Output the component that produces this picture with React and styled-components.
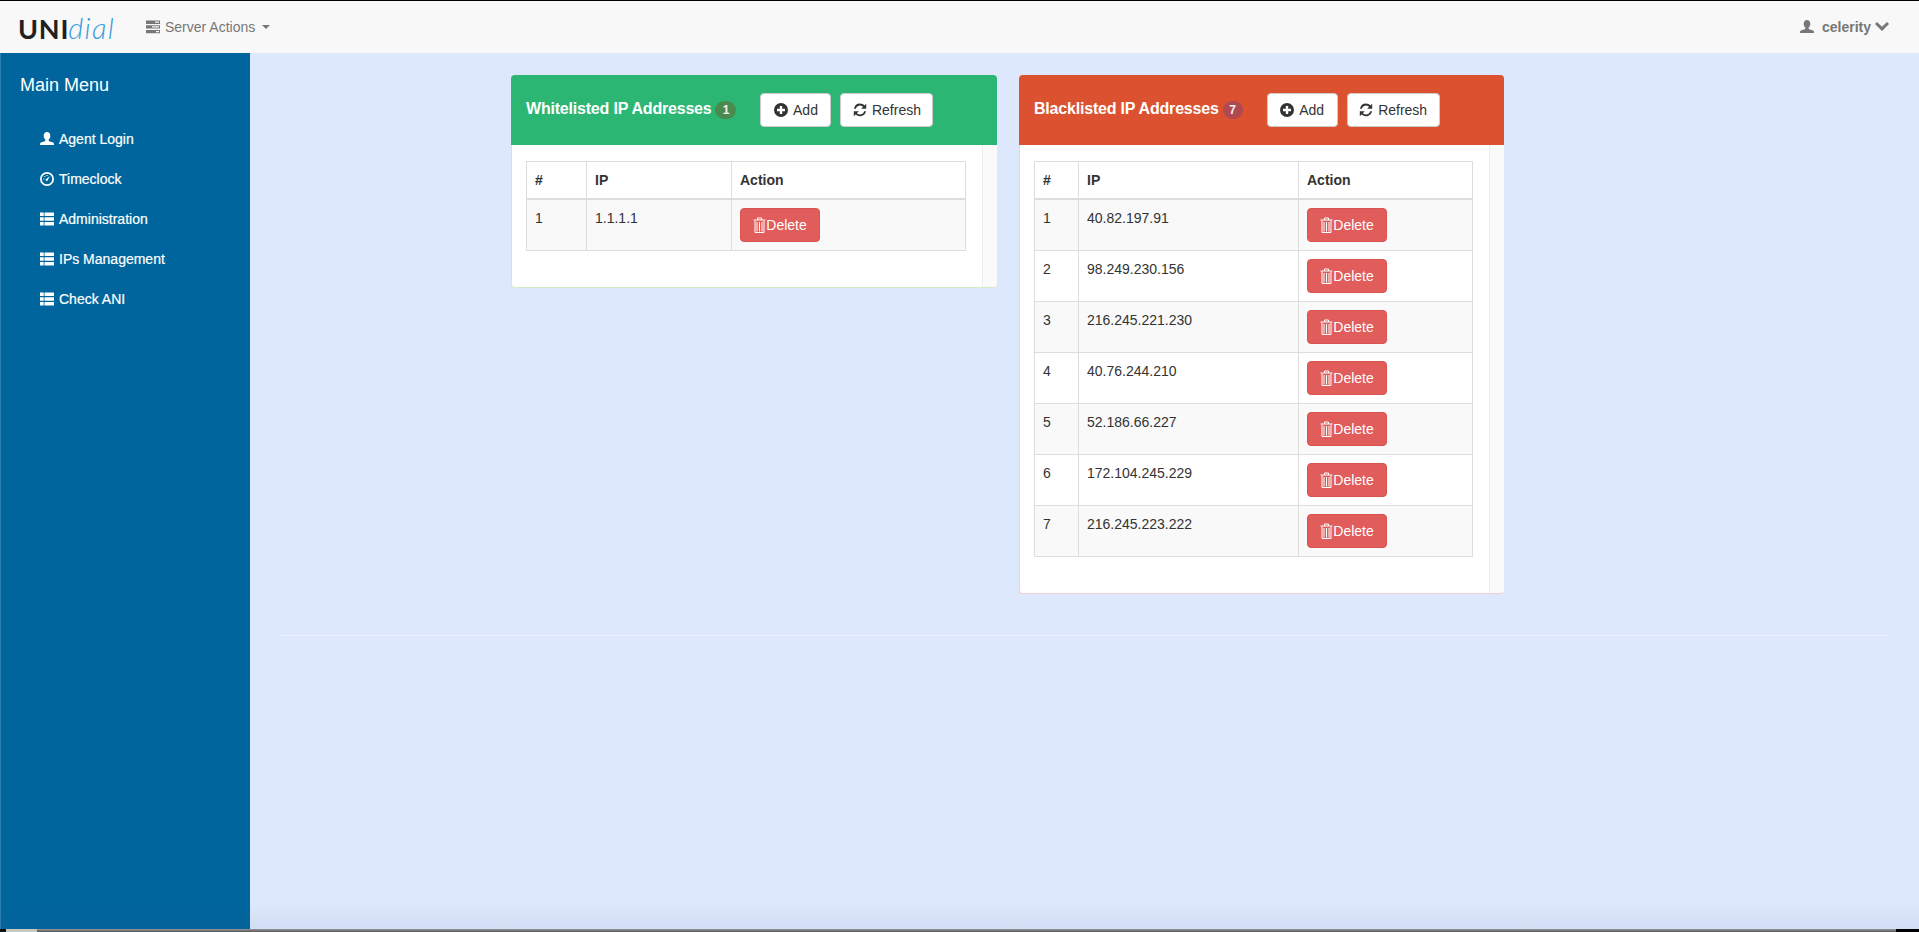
import React from "react";
import styled, { createGlobalStyle } from "styled-components";

const Global = createGlobalStyle`
  html, body { margin: 0; padding: 0; height: 100%; }
  body { font-family: "Liberation Sans", Arial, sans-serif; font-size: 14px; line-height: 20px; color: #333; background: #dde8fc; overflow: hidden; }
  * { box-sizing: border-box; }
`;

const Page = styled.div`
  position: relative; height: 932px; display: flex; flex-direction: column;
  border-top: 1px solid #000; overflow: hidden;
`;
const Navbar = styled.header`
  height: 52px; flex: none; display: flex; align-items: center; background: #f8f8f8; color: #777;
  padding: 0 30px 0 18px;
`;
const Logo = styled.div`
  font-family: Lato, "Liberation Sans", sans-serif; line-height: 1; display: flex; align-items: baseline; width: 128px;
`;
const LogoBold = styled.span`font-size: 27px; font-weight: 700; color: #231f20; letter-spacing: 0.8px;`;
const LogoLight = styled.span`font-size: 29px; font-weight: 300; font-style: italic; color: #3b9de0; letter-spacing: 1.3px; margin-left: -1px;`;
const NavMenu = styled.div`display: flex; align-items: center; gap: 5px; flex: 1;`;
const Caret = styled.span`
  width: 0; height: 0; margin-left: 2px; border-top: 4px solid #777; border-left: 4px solid transparent; border-right: 4px solid transparent;
`;
const UserMenu = styled.div`display: flex; align-items: center; font-weight: 700;`;
const UserName = styled.span`margin: 0 4px 0 8px;`;
const Layout = styled.div`flex: 1; display: flex; min-height: 0;`;
const Sidebar = styled.nav`
  width: 250px; flex: none; background: #00659d; color: #fff; padding: 20px 0 0 20px; margin-bottom: 3px;
  box-shadow: inset 1px 0 #2a7fb0;
`;
const SideTitle = styled.div`font-size: 18px; line-height: 24px; margin-bottom: 22px;`;
const SideList = styled.div`display: flex; flex-direction: column; padding-left: 20px;`;
const SideItem = styled.div`height: 40px; display: flex; align-items: center; gap: 5px; font-size: 14px; -webkit-text-stroke: 0.2px #fff;`;
const Main = styled.main`flex: 1; min-width: 0; padding: 22px 31px 0 30px;`;
const PanelRow = styled.div`display: flex; align-items: flex-start; gap: 22px; margin-left: 231px;`;
const Panel = styled.section`
  width: ${p => p.$w}px; background: #fff; border-radius: 4px; border: 1px solid ${p => p.$border};
  border-top: 0;
`;
const PanelHead = styled.div`
  height: 70px; margin: 0 -1px; background: ${p => p.$bg}; color: #fff; display: flex; align-items: center; padding: 0 15px;
  border-radius: 4px 4px 0 0;
`;
const PanelTitle = styled.h3`margin: 0 0 2px; font-size: 16px; line-height: 18px; font-weight: 700; letter-spacing: -0.2px;`;
const Badge = styled.span`
  width: ${p => p.$w}px; height: 18px; border-radius: 9px; background: ${p => p.$bg}; font-size: 12px; font-weight: 700; line-height: 18px;
  text-align: center; margin: 0 ${p => p.$after}px 0 ${p => p.$before}px; color: #f2f2f2;
`;
const Btn = styled.button`
  height: 34px; width: ${p => p.$w}px; margin-right: 9px; border: 1px solid #ccc; border-radius: 4px; background: #fff; color: #333; font: inherit; padding: 0;
  display: flex; align-items: center; justify-content: center; gap: 5px;
`;
const PanelBody = styled.div`display: flex;`;
const TableWrap = styled.div`flex: 1; padding: 16px 16px 36px 14px;`;
const Strip = styled.div`width: 15px; flex: none; background: #fafafa; border-left: 1px solid #eee; border-radius: 0 0 3px 0;`;
const Table = styled.table`
  width: 100%; border-collapse: collapse; table-layout: fixed; font-size: 14px; line-height: 20px;
`;
const Th = styled.th`
  border: 1px solid #ddd; border-bottom-width: 2px; padding: 8px; text-align: left; font-weight: 700; height: 37px;
`;
const Td = styled.td`border: 1px solid #ddd; padding: 8px; vertical-align: top; height: 51px; background: ${p => p.$odd ? "#f9f9f9" : "#fff"};`;
const DeleteBtn = styled.button`
  width: 80px; height: 34px; border: 1px solid #d9534f; border-radius: 4px; background: #e05d5b; color: #fff; font: inherit; padding: 0;
  display: flex; align-items: center; justify-content: center; gap: 0;
`;
const Rule = styled.hr`border: 0; border-top: 1px solid #eaf0fc; margin: 41px 0 0;`;
const Shade = styled.div`
  position: absolute; left: 0; right: 0; bottom: 3px; height: 26px; pointer-events: none;
  background: linear-gradient(to bottom, rgba(60,80,120,0), rgba(60,80,120,0.07));
`;
const WindowEdge = styled.div`
  position: absolute; left: 0; right: 0; bottom: 0; height: 3px;
  background:
    linear-gradient(to right, #111 0 6px, #c8c8c0 6px 37px, transparent 37px 1896px, #000 1896px),
    linear-gradient(#9a9a9a, #555);
`;
const Svg = styled.svg`flex: none; display: block; fill: currentColor;`;
const TrashSvg = styled.svg`flex: none; display: block; fill: none; stroke: currentColor; stroke-width: 1;`;

const User = () => (
  <Svg width={14} height={14} viewBox="0 0 14 14"><path d="M7 0c2 0 3.300 1.500 3.300 3.700 0 1.500-.6 3.100-1.600 3.800v1.200c0 .5 4 1.200 4.800 2.100.5.600.5 1.400.5 2.200H0c0-.8 0-1.600.5-2.200.8-.9 4.800-1.600 4.800-2.100V7.500C4.300 6.800 3.700 5.200 3.700 3.700 3.700 1.500 5 0 7 0z"/></Svg>
);
const Dash = () => (
  <Svg width={14} height={14} viewBox="0 0 14 14"><path fillRule="evenodd" d="M7 0a7 7 0 1 1 0 14A7 7 0 0 1 7 0zm0 1.700a5.300 5.300 0 1 0 0 10.600A5.300 5.300 0 0 0 7 1.700z"/><path d="M10 4 7.900 7.800a1.100 1.100 0 1 1-1.400-1zM3.200 6.500h1.100v1.100H3.200zM6.500 3h1.100v1.100H6.500zM4.300 4h1v1h-1z"/></Svg>
);
const ThList = () => (
  <Svg width={14} height={14} viewBox="0 0 14 14"><path d="M0 .5h3.700v3.600H0zM4.500 .5H14v3.600H4.500zM0 5.200h3.700v3.600H0zM4.500 5.200H14v3.600H4.500zM0 9.900h3.700v3.600H0zM4.500 9.900H14v3.600H4.500z"/></Svg>
);
const Tasks = () => (
  <Svg width={14} height={14} viewBox="0 0 14 14"><path d="M0 .5h14v3.400H0zM0 5.200h14v3.400H0zM0 9.900h14v3.400H0z"/><path fill="#f8f8f8" d="M9 1.600h4v1.200H9zM6 6.300h7v1.200H6zM10 11h3v1.200h-3z"/></Svg>
);
const Chevron = () => (
  <Svg width={14} height={14} viewBox="0 0 14 14"><path d="M0 4l2-2 5 4.800L12 2l2 2-7 7z"/></Svg>
);
const Plus = () => (
  <Svg width={14} height={14} viewBox="0 0 14 14"><path fillRule="evenodd" d="M7 0a7 7 0 1 1 0 14A7 7 0 0 1 7 0zM5.800 3v2.800H3v2.400h2.800V11h2.400V8.200H11V5.800H8.200V3z"/></Svg>
);
const Refresh = () => (
  <Svg width={14} height={14} viewBox="0 0 14 14"><path d="M7 .6c1.700 0 3.300.7 4.400 1.900L13.200.7v5H8.200l1.900-1.900A4.400 4.400 0 0 0 2.800 5.700H1A6.200 6.200 0 0 1 7 .6zM.8 8.300h5L3.900 10.200a4.400 4.400 0 0 0 7.300-1.900H13a6.200 6.200 0 0 1-10.400 3.200L.8 13.300z"/></Svg>
);
const Trash = () => (
  <TrashSvg width={13} height={16} viewBox="0 0 13 16">
    <path d="M.5 3h12M4.500 3V1h4v2M2 3.500v12h9v-12M4 5v9.500M6.500 5v9.500M9 5v9.500" />
  </TrashSvg>
);

const Row = ({ n, ip }) => (
  <tr>
    <Td $odd={n % 2 === 1}>{n}</Td>
    <Td $odd={n % 2 === 1}>{ip}</Td>
    <Td $odd={n % 2 === 1}><DeleteBtn><Trash />Delete</DeleteBtn></Td>
  </tr>
);

const IpPanel = ({ w, title, count, bg, border, badge, badgeW, before, after, cols, rows }) => (
  <Panel $w={w} $border={border}>
    <PanelHead $bg={bg}>
      <PanelTitle>{title}</PanelTitle>
      <Badge $bg={badge} $w={badgeW} $before={before} $after={after}>{count}</Badge>
      <Btn $w={71}><Plus />Add</Btn>
      <Btn $w={93}><Refresh />Refresh</Btn>
    </PanelHead>
    <PanelBody>
      <TableWrap>
        <Table>
          <colgroup>{cols.map((c, i) => <col key={i} width={c} />)}</colgroup>
          <thead><tr><Th>#</Th><Th>IP</Th><Th>Action</Th></tr></thead>
          <tbody>{rows.map((ip, i) => <Row key={ip} n={i + 1} ip={ip} />)}</tbody>
        </Table>
      </TableWrap>
      <Strip />
    </PanelBody>
  </Panel>
);

const menu = [
  [User, "Agent Login"],
  [Dash, "Timeclock"],
  [ThList, "Administration"],
  [ThList, "IPs Management"],
  [ThList, "Check ANI"],
];

export default function App() {
  return (
    <Page>
      <Global />
      <Navbar>
        <Logo><LogoBold>UNI</LogoBold><LogoLight>dial</LogoLight></Logo>
        <NavMenu><Tasks />Server Actions<Caret /></NavMenu>
        <UserMenu><User /><UserName>celerity</UserName><Chevron /></UserMenu>
      </Navbar>
      <Layout>
        <Sidebar>
          <SideTitle>Main Menu</SideTitle>
          <SideList>
            {menu.map(([I, t]) => <SideItem key={t}><I />{t}</SideItem>)}
          </SideList>
        </Sidebar>
        <Main>
          <PanelRow>
            <IpPanel w={486} title="Whitelisted IP Addresses" count={1} bg="#2bb673" border="#d6e9c6" badge="#4a8a4f"
              badgeW={21} before={4} after={24} cols={[60, 145, 234]} rows={["1.1.1.1"]} />
            <IpPanel w={485} title="Blacklisted IP Addresses" count={7} bg="#dc5230" border="#f4cfd3" badge="#b04a50"
              badgeW={20} before={4} after={24} cols={[44, 220, 174]}
              rows={["40.82.197.91", "98.249.230.156", "216.245.221.230", "40.76.244.210", "52.186.66.227", "172.104.245.229", "216.245.223.222"]} />
          </PanelRow>
          <Rule />
        </Main>
      </Layout>
      <Shade />
      <WindowEdge />
    </Page>
  );
}
